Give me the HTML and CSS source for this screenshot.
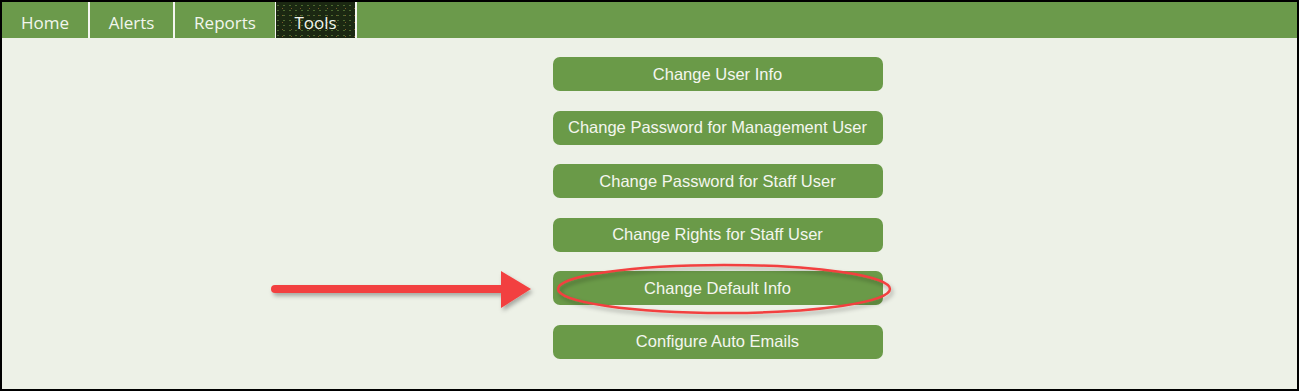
FILE: index.html
```html
<!DOCTYPE html>
<html>
<head>
<meta charset="utf-8">
<link rel="stylesheet" href="styles.css">
</head>
<body>
<div class="frame">
  <nav class="nav">
    <a class="tab tab-home">Home</a>
    <a class="tab tab-alerts">Alerts</a>
    <a class="tab tab-reports">Reports</a>
    <a class="tab tab-tools active">Tools</a>
  </nav>
  <main class="content">
    <div class="menu">
      <button class="btn">Change User Info</button>
      <button class="btn">Change Password for Management User</button>
      <button class="btn">Change Password for Staff User</button>
      <button class="btn">Change Rights for Staff User</button>
      <button class="btn">Change Default Info</button>
      <button class="btn">Configure Auto Emails</button>
    </div>
    <svg class="annot" width="1295" height="353" viewBox="0 0 1295 353">
      <defs>
        <filter id="sh" x="-10%" y="-50%" width="120%" height="200%">
          <feDropShadow dx="2" dy="3" stdDeviation="2" flood-color="#000" flood-opacity="0.3"/>
        </filter>
      </defs>
      <g filter="url(#sh)">
        <line x1="273" y1="251" x2="505" y2="251" stroke="#f2403f" stroke-width="8" stroke-linecap="round"/>
        <polygon points="499,233 529,251 499,270" fill="#f2403f"/>
        <ellipse cx="722" cy="251" rx="166" ry="24" fill="none" stroke="#f2403f" stroke-width="2.5"/>
      </g>
    </svg>
  </main>
</div>
</body>
</html>
```
FILE: styles.css
```css
* { box-sizing: border-box; }
html, body { margin: 0; padding: 0; }
body { width: 1299px; height: 391px; overflow: hidden; background: #000; }
.frame {
  width: 1299px;
  height: 391px;
  border: 2px solid #000;
  display: flex;
  flex-direction: column;
  background: #edf1e7;
}
.nav {
  height: 36px;
  background: #6b9a4b;
  display: flex;
  flex: none;
}
.tab {
  display: flex;
  align-items: center;
  justify-content: center;
  color: #f2f6ee;
  font-family: "Open Sans", "Liberation Sans", sans-serif;
  font-size: 17px;
  border-right: 2px solid #f4f6f0;
  padding-top: 4px;
}
.tab-home { width: 88px; }
.tab-alerts { width: 85px; }
.tab-reports { width: 101px; border-right-width: 1px; }
.tab-tools {
  width: 81px;
  background-color: #1b2812;
  background-image: radial-gradient(circle, #7a5a2a 0.6px, transparent 0.9px), radial-gradient(circle, #4c6a30 0.6px, transparent 0.9px);
  background-size: 9px 7px, 6px 5px;
  background-position: 2px 3px, 5px 1px;
}
.content {
  flex: 1;
  position: relative;
  display: flex;
  justify-content: center;
}
.menu {
  display: flex;
  flex-direction: column;
  gap: 19.6px;
  padding-top: 19px;
  margin-left: 136px;
}
.btn {
  width: 330px;
  height: 34px;
  border: none;
  border-radius: 7px;
  background: #6a9a48;
  color: #f4f6ef;
  font-family: "Liberation Sans", Arial, sans-serif;
  font-size: 16.5px;
  padding: 0;
  cursor: pointer;
}
.annot {
  position: absolute;
  left: 0;
  top: 0;
  pointer-events: none;
}
```
